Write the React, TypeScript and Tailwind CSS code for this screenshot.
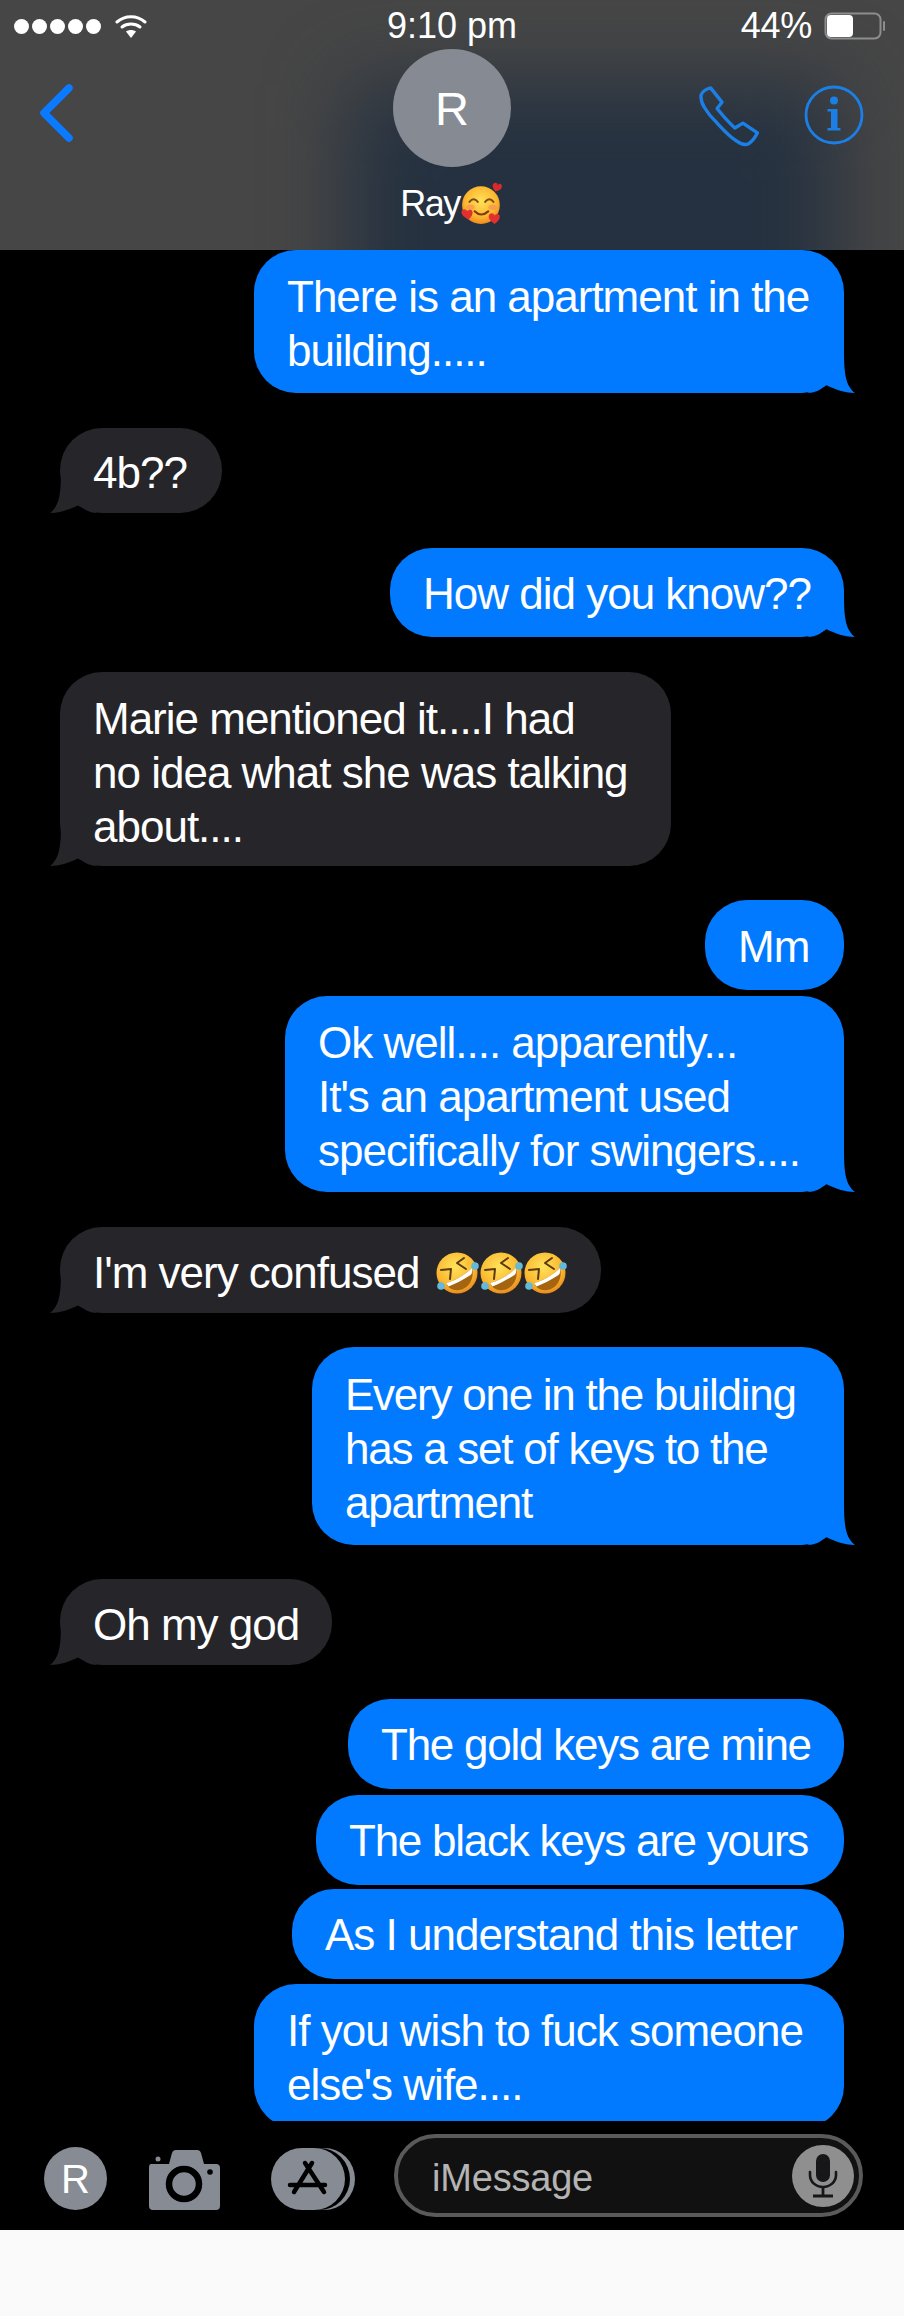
function Tail({ side, color }: { side: "sent" | "received"; color: string }) {
  return (
    <svg
      width="47"
      height="42"
      viewBox="0 0 47 42"
      className={side === "sent" ? "absolute bottom-0 right-[-11px]" : "absolute bottom-0 left-[-10px] -scale-x-100"}
    >
      <path d="M36 0 C36 24 38 35 47 42 C38 42 28 39 18 34 C13 39 6 42 0 42 Z" fill={color} />
    </svg>
  )
}

function Bubble({
  side,
  lines,
  tail,
  tight,
  className,
  children,
}: {
  side: "sent" | "received"
  lines?: string[]
  tail?: boolean
  tight?: boolean
  className: string
  children?: React.ReactNode
}) {
  const sent = side === "sent"
  return (
    <div
      className={`relative rounded-[42px] pl-[33px] pr-[33px] text-[44px] leading-[54px] text-white whitespace-nowrap ${
        tight ? "tracking-[-1.25px]" : "tracking-[-1px]"
      } ${sent ? "self-end bg-[#027aff]" : "self-start bg-[#26252a]"} ${className}`}
    >
      {lines?.map((line) => (
        <div key={line}>{line}</div>
      ))}
      {children}
      {tail && <Tail side={side} color={sent ? "#027aff" : "#26252a"} />}
    </div>
  )
}

function HeartsEmoji() {
  return (
    <svg width="44" height="44" viewBox="0 0 42 42" className="shrink-0">
      <defs>
        <radialGradient id="hearts-face" cx="50%" cy="40%" r="60%">
          <stop offset="0%" stopColor="#ffe15a" />
          <stop offset="70%" stopColor="#fcb62e" />
          <stop offset="100%" stopColor="#ee8a22" />
        </radialGradient>
      </defs>
      <circle cx="20" cy="22" r="18" fill="url(#hearts-face)" />
      <path d="M9 19 Q13 14 17 19 M24 19 Q28 14 32 19" stroke="#7b4a12" strokeWidth="1.8" fill="none" strokeLinecap="round" />
      <path d="M14 28 Q20 34 27 28" stroke="#7b3a12" strokeWidth="2" fill="none" strokeLinecap="round" />
      <ellipse cx="10" cy="24" rx="4" ry="2.5" fill="#f58a5a" opacity="0.6" />
      <ellipse cx="31" cy="24" rx="4" ry="2.5" fill="#f58a5a" opacity="0.6" />
      <path d="M34 9 C31 6 30 2 33 1 C35 0 36 2 36 3 C37 1 40 1 40 4 C40 7 37 8 34 9Z" fill="#d92b2b" />
      <path d="M8 36 C3 33 0 30 2 27 C4 25 6 26 7 28 C8 26 12 26 12 29 C12 32 10 34 8 36Z" fill="#e0312f" />
      <path d="M33 40 C29 37 26 34 28 31 C30 29 32 30 33 32 C34 30 38 30 38 33 C38 36 36 38 33 40Z" fill="#e0312f" />
    </svg>
  )
}

function RoflEmoji({ id }: { id: string }) {
  return (
    <svg width="44" height="44" viewBox="0 0 44 44" className="shrink-0">
      <defs>
        <radialGradient id={id} cx="45%" cy="35%" r="65%">
          <stop offset="0%" stopColor="#ffe25c" />
          <stop offset="70%" stopColor="#fbb92f" />
          <stop offset="100%" stopColor="#e98d1f" />
        </radialGradient>
      </defs>
      <circle cx="22" cy="22" r="20.5" fill={`url(#${id})`} />
      <path d="M29 7 L22 12 L31 18" stroke="#5c3a10" strokeWidth="2" fill="none" strokeLinecap="round" strokeLinejoin="round" />
      <path d="M6 19 L16 18 L15 28" stroke="#5c3a10" strokeWidth="2" fill="none" strokeLinecap="round" strokeLinejoin="round" />
      <path d="M11 32 C20 30 30 24 37 17 C40 28 33 38 24 39 C18 40 13 37 11 32Z" fill="#a5640f" />
      <path d="M11 32 C20 30 30 24 37 17 C37.500 20 37 23 35.500 24 C28 29 20 33 13.500 35.500Z" fill="#fff" />
      <circle cx="40" cy="15" r="3.800" fill="#63b9d9" />
      <circle cx="6" cy="35" r="3.800" fill="#63b9d9" />
    </svg>
  )
}

function Header() {
  return (
    <header className="relative h-[250px] shrink-0 overflow-hidden bg-[#464646] font-['Liberation_Sans',sans-serif] text-white">
      {/* blurred wallpaper showing through the bar */}
      <div className="absolute left-[350px] top-[85px] h-[260px] w-[485px] bg-[#253140] blur-[40px]" />

      <div className="relative grid h-[49px] grid-cols-[1fr_auto_1fr] items-center">
        <div className="flex items-center gap-[3px] pl-[14px]">
          <span className="size-[15px] rounded-full bg-white" />
          <span className="size-[15px] rounded-full bg-white" />
          <span className="size-[15px] rounded-full bg-white" />
          <span className="size-[15px] rounded-full bg-white" />
          <span className="size-[15px] rounded-full bg-white" />
          <svg width="32" height="25" viewBox="0 0 32 25" className="ml-[11px]">
            <path d="M2 8 C10 1 22 1 30 8" stroke="#fff" strokeWidth="3" fill="none" strokeLinecap="round" />
            <path d="M7 13 C12 9 20 9 25 13" stroke="#fff" strokeWidth="3" fill="none" strokeLinecap="round" />
            <path d="M11 17.500 C14 15.500 18 15.500 21 17.500 L16 24 Z" fill="#fff" />
          </svg>
        </div>
        <div className="text-[36px] leading-[52px]">9:10 pm</div>
        <div className="flex items-center justify-end pr-[18px]">
          <span className="text-[36px] leading-[52px] tracking-[-0.3px]">44%</span>
          <svg width="62" height="28" viewBox="0 0 62 28" className="ml-[12px]">
            <rect x="1.500" y="1.500" width="55" height="25" rx="6" stroke="#8d8d8d" strokeWidth="2" fill="none" />
            <rect x="3" y="3" width="26" height="22" rx="4" fill="#fff" />
            <rect x="59" y="9" width="2" height="10" rx="1" fill="#8d8d8d" />
          </svg>
        </div>
      </div>

      <div className="relative grid grid-cols-[1fr_auto_1fr]">
        <div className="pl-[38px] pt-[35px]">
          <svg width="38" height="58" viewBox="0 0 38 58">
            <path d="M31 4 L6 29 L31 54" stroke="#0a7aff" strokeWidth="7.500" fill="none" strokeLinecap="round" strokeLinejoin="round" />
          </svg>
        </div>
        <div className="flex flex-col items-center">
          <div className="flex size-[118px] items-center justify-center rounded-full bg-[#868a93] text-[47px] leading-none">
            R
          </div>
          <div className="mt-[15px] flex items-center text-[36px] leading-[42px] tracking-[-1.5px]">
            Ray
            <HeartsEmoji />
          </div>
        </div>
        <div className="flex items-start justify-end gap-[42px] pl-[30px] pr-[40px] pt-[36px]">
          <svg width="64" height="64" viewBox="-1 -1 66 66">
            <path
              d="M12 2 C8 3 3 6 2 10 C2 14 3 18 5.300 21.700 C9 28 13 33 18.700 38.300 C24 44 31 52 38.700 56.700 C43 60 47 61 50.300 60 C54 58 58 53 60.300 48.300 L45.300 38.300 L37 43.300 C30 37 24 30 18.700 23.300 L23.700 16.700 Z"
              stroke="#1b7fe6"
              strokeWidth="3.500"
              fill="none"
              strokeLinejoin="round"
            />
          </svg>
          <svg width="60" height="60" viewBox="0 0 60 60">
            <circle cx="30" cy="30" r="28" stroke="#1b7fe6" strokeWidth="2.800" fill="none" />
            <circle cx="30" cy="15.500" r="4" fill="#1b7fe6" />
            <rect x="27" y="24" width="6.500" height="20" fill="#1b7fe6" />
            <rect x="23.500" y="24" width="6" height="2.500" fill="#1b7fe6" />
            <rect x="23.500" y="43" width="13" height="2.500" fill="#1b7fe6" />
          </svg>
        </div>
      </div>
    </header>
  )
}

function Messages() {
  return (
    <main className="flex h-[1871px] shrink-0 flex-col overflow-hidden bg-black px-[60px] font-['Liberation_Sans',sans-serif]">
      <Bubble side="sent" tail className="pb-[15px] pt-[20px] w-[590px]" lines={["There is an apartment in the", "building....."]} />
      <Bubble side="received" tail className="mt-[35px] pb-[13px] pt-[18px] w-[162px]" lines={["4b??"]} />
      <Bubble side="sent" tail className="mt-[35px] pb-[16px] pt-[19px]" lines={["How did you know??"]} />
      <Bubble side="received" tail className="mt-[35px] pb-[12px] pt-[20px] w-[611px]" lines={["Marie mentioned it....I had", "no idea what she was talking", "about...."]} />
      <Bubble side="sent" className="mt-[34px] pb-[16px] pt-[20px] w-[139px]" lines={["Mm"]} />
      <Bubble side="sent" tail className="mt-[6px] pb-[14px] pt-[20px] w-[559px]" lines={["Ok well.... apparently...", "It's an apartment used", "specifically for swingers...."]} />
      <Bubble side="received" tail className="mt-[35px] pb-[13px] pt-[19px] w-[541px]">
        <div className="flex items-center">
          I'm very confused
          <span className="ml-[16px] flex">
            <RoflEmoji id="rofl-1" />
            <RoflEmoji id="rofl-2" />
            <RoflEmoji id="rofl-3" />
          </span>
        </div>
      </Bubble>
      <Bubble side="sent" tail tight className="mt-[34px] pb-[15px] pt-[21px] w-[532px]" lines={["Every one in the building", "has a set of keys to the", "apartment"]} />
      <Bubble side="received" tail className="mt-[34px] pb-[13px] pt-[19px]" lines={["Oh my god"]} />
      <Bubble side="sent" tight className="mt-[34px] pb-[17px] pt-[19px] w-[496px]" lines={["The gold keys are mine"]} />
      <Bubble side="sent" tight className="mt-[6px] pb-[17px] pt-[19px] w-[528px]" lines={["The black keys are yours"]} />
      <Bubble side="sent" className="mt-[4px] pb-[17px] pt-[19px] w-[552px]" lines={["As I understand this letter"]} />
      <Bubble side="sent" className="mt-[5px] shrink-0 pb-[16px] pt-[20px] w-[590px]" lines={["If you wish to fuck someone", "else's wife...."]} />
    </main>
  )
}

function Composer() {
  return (
    <footer className="flex h-[109px] shrink-0 items-start bg-black font-['Liberation_Sans',sans-serif]">
      <div className="ml-[44px] mt-[26px] flex size-[63px] items-center justify-center rounded-full bg-[#878b94] text-[40px] leading-none text-white">
        R
      </div>
      <svg width="71" height="60" viewBox="0 0 71 60" className="ml-[42px] mt-[29px]">
        <path d="M2 14 H20 L23 3 Q24 0 27 0 H48 Q51 0 52 3 L55 14 H67 Q71 14 71 18 V56 Q71 60 67 60 H4 Q0 60 0 56 V18 Q0 14 2 14Z" fill="#878b94" />
        <circle cx="35" cy="34" r="15" fill="none" stroke="#000" strokeWidth="6.500" />
        <circle cx="61" cy="22" r="2.800" fill="#000" />
        <circle cx="9" cy="9" r="2.500" fill="#878b94" />
      </svg>
      <svg width="84" height="62" viewBox="0 0 84 62" className="ml-[51px] mt-[27px]">
        <rect x="12" y="0" width="72" height="62" rx="31" fill="#878b94" />
        <rect x="0" y="0" width="79" height="62" rx="31" fill="#000" />
        <rect x="0" y="0" width="74" height="62" rx="31" fill="#878b94" />
        <path d="M34 15 L53 44 M41 15 L23 44 M19 37 H54" stroke="#000" strokeWidth="4.500" strokeLinecap="round" fill="none" />
      </svg>
      <div className="ml-[39px] mt-[13px] flex h-[83px] w-[469px] items-center justify-between rounded-full border-[4px] border-[#5a5a5a] bg-[#111111] pl-[34px] pr-[5px]">
        <span className="pt-[4px] text-[38px] leading-none tracking-[-0.2px] text-[#b4b4b4]">iMessage</span>
        <div className="flex size-[62px] items-center justify-center rounded-full bg-[#8f8f8f]">
          <svg width="30" height="44" viewBox="0 0 30 44">
            <rect x="8" y="0" width="14" height="28" rx="7" fill="#17171a" />
            <path d="M2 18 V21 C2 28 8 33 15 33 C22 33 28 28 28 21 V18" stroke="#17171a" strokeWidth="2.600" fill="none" strokeLinecap="round" />
            <path d="M15 33 V41 M5 42 H25" stroke="#17171a" strokeWidth="2.800" fill="none" />
          </svg>
        </div>
      </div>
    </footer>
  )
}

export default function App() {
  return (
    <div className="flex h-[2316px] w-[904px] flex-col overflow-hidden bg-[#fafafa]">
      <Header />
      <Messages />
      <Composer />
    </div>
  )
}
